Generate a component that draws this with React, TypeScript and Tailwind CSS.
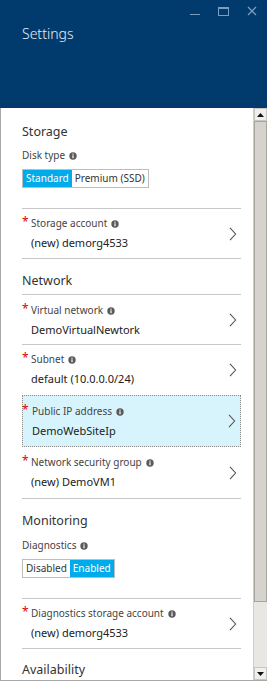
function Info() {
  return (
    <svg width="8" height="8" viewBox="0 0 8 8" className="inline-block ml-[4px] -mt-[1px]">
      <circle cx="4" cy="4" r="3.7" fill="#5a5a5a" />
      <rect x="3.4" y="3.3" width="1.2" height="2.9" fill="#fff" />
      <rect x="3.4" y="1.6" width="1.2" height="1.1" fill="#fff" />
    </svg>
  )
}

function Chevron() {
  return (
    <svg width="8" height="14" viewBox="0 0 8 14" className="absolute right-[4px] top-1/2 -translate-y-1/2">
      <path d="M1 0.8 L6.6 7 L1 13.2" fill="none" stroke="#555" strokeWidth="1.1" />
    </svg>
  )
}

function Row({
  label,
  value,
  cls,
}: {
  label: string
  value: string
  cls: string
}) {
  return (
    <div className={'relative pl-[9px] ' + cls}>
      <span className="absolute left-[0px] text-[12px] leading-[12px] text-[#e00000]" style={{ marginTop: 1 }}>*</span>
      <div className="h-[16px] leading-[16px] text-[10px] text-[#444]">
        {label}
        <Info />
      </div>
      <div className="mt-[3px] h-[18px] leading-[18px] text-[11px] text-[#222]">{value}</div>
      <Chevron />
    </div>
  )
}

function Toggle({ left, right, on }: { left: string; right: string; on: 'left' | 'right' }) {
  const a = 'h-full px-[3px] flex items-center text-[10px] '
  return (
    <div className="flex w-fit h-[19px] border border-[#bdbdbd]">
      <div className={a + (on === 'left' ? 'bg-[#00abec] text-white' : 'bg-white text-[#333]')}>{left}</div>
      <div className={a + (on === 'right' ? 'bg-[#00abec] text-white' : 'bg-white text-[#333]')}>{right}</div>
    </div>
  )
}

export default function App() {
  return (
    <div
      className="w-[267px] h-[681px] overflow-hidden bg-white flex flex-col"
      style={{ fontFamily: '"Noto Sans", "Open Sans", sans-serif' }}
    >
      <div className="h-[108px] shrink-0 bg-[#013a6c] relative">
        <div className="absolute left-[22px] top-[23px] text-[14px] font-light text-[#e8eef5]">Settings</div>
        <div className="absolute top-[6px] right-[10px] flex items-center gap-[18px]">
          <div className="w-[10px] h-[10px] flex items-end pb-[1px]">
            <div className="w-[10px] h-[1.5px] bg-[#7e9dbd]" />
          </div>
          <div className="w-[11px] h-[9px] border border-[#7e9dbd] border-t-[2px]" />
          <svg width="10" height="10" viewBox="0 0 10 10">
            <path d="M1 1 L9 9 M9 1 L1 9" stroke="#7e9dbd" strokeWidth="1.3" />
          </svg>
        </div>
      </div>

      <div className="flex-1 flex border-l border-b border-[#a8a8a8] min-h-0">
        <div className="flex-1 pl-[21px] pr-[12px] overflow-hidden">
          <div className="pt-[14px] pb-[20px] border-b border-[#c8c8c8]">
            <div className="h-[20px] leading-[20px] text-[12.5px] text-[#333]">Storage</div>
            <div className="mt-[5px] h-[16px] leading-[16px] text-[10px] text-[#444]">
              Disk type
              <Info />
            </div>
            <div className="mt-[6px]">
              <Toggle left="Standard" right="Premium (SSD)" on="left" />
            </div>
          </div>
          <Row label="Storage account" value="(new) demorg4533" cls="h-[50px] pt-[6px] border-b border-[#c8c8c8]" />

          <div className="h-[36px] pt-[12px] border-b border-[#c8c8c8]">
            <div className="h-[20px] leading-[20px] text-[12.5px] text-[#333]">Network</div>
          </div>
          <Row label="Virtual network" value="DemoVirtualNewtork" cls="h-[50px] pt-[7px] border-b border-[#c8c8c8]" />
          <Row label="Subnet" value="default (10.0.0.0/24)" cls="h-[50px] pt-[6px]" />
          <Row
            label="Public IP address"
            value="DemoWebSiteIp"
            cls="h-[52px] pt-[7px] bg-[#d7f4fd] border border-dotted border-[#8a8a8a] [&>span]:left-[-1px]"
          />
          <Row label="Network security group" value="(new) DemoVM1" cls="h-[52px] pt-[7px] border-b border-[#c8c8c8]" />

          <div className="pt-[12px] pb-[20px] border-b border-[#c8c8c8]">
            <div className="h-[20px] leading-[20px] text-[12.5px] text-[#333]">Monitoring</div>
            <div className="mt-[6px] h-[16px] leading-[16px] text-[10px] text-[#444]">
              Diagnostics
              <Info />
            </div>
            <div className="mt-[6px]">
              <Toggle left="Disabled" right="Enabled" on="right" />
            </div>
          </div>
          <Row
            label="Diagnostics storage account"
            value="(new) demorg4533"
            cls="h-[50px] pt-[6px] border-b border-[#c8c8c8]"
          />

          <div className="pt-[11px]">
            <div className="h-[20px] leading-[20px] text-[12.5px] text-[#333]">Availability</div>
          </div>
        </div>

        <div className="w-[14px] shrink-0 bg-[#e9e7e4] border-l border-[#d0cdc8] flex flex-col">
          <div className="h-[13px] flex items-center justify-center bg-[#f0efed] border border-[#c9c6c0]">
            <svg width="7" height="4" viewBox="0 0 7 4">
              <path d="M0 4 L3.5 0 L7 4 Z" fill="#111" />
            </svg>
          </div>
          <div className="h-[481px] bg-[#d6d3ce] border border-[#a9a59e]" />
          <div className="flex-1" />
          <div className="h-[13px] flex items-center justify-center bg-[#f0efed] border border-[#c9c6c0]">
            <svg width="7" height="4" viewBox="0 0 7 4">
              <path d="M0 0 L3.5 4 L7 0 Z" fill="#111" />
            </svg>
          </div>
        </div>
      </div>
    </div>
  )
}
